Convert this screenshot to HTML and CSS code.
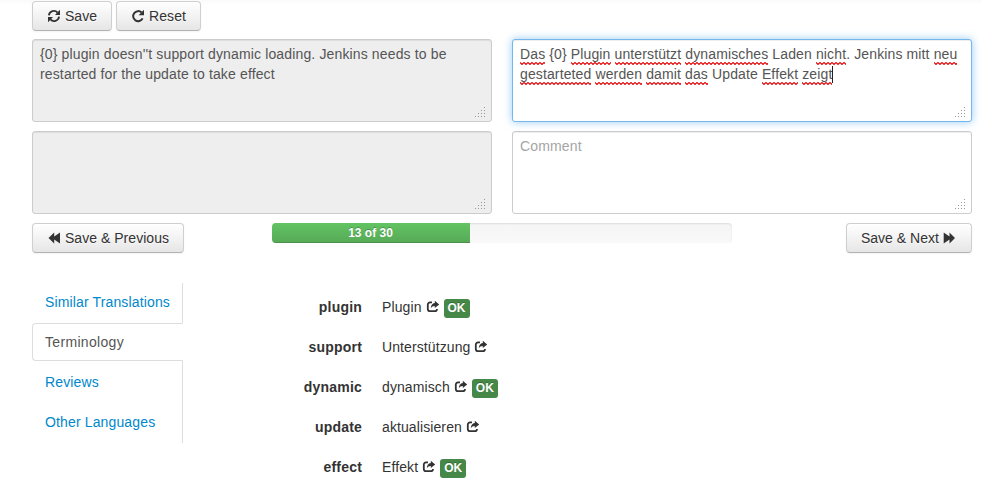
FILE: index.html
```html
<!DOCTYPE html>
<html lang="en">
<head>
<meta charset="utf-8">
<title>Translate</title>
<link rel="stylesheet" href="styles.css">
</head>
<body>
<svg class="defs" width="0" height="0">
  <defs>
    <symbol id="refresh" viewBox="0 0 14 14"><path d="M1.900 6.300A5 5 0 0 1 10.600 3.700M12.100 7.700A5 5 0 0 1 3.400 10.300" fill="none" stroke="#333" stroke-width="1.800"/><path d="M13 .8v5.200H8zM1 13.200V8h5z"/></symbol>
    <symbol id="repeat" viewBox="0 0 14 14"><path d="M11.600 9.400A5 5 0 1 1 10.600 3.500" fill="none" stroke="#333" stroke-width="2"/><path d="M13 .8v5.400H7.600z"/></symbol>
    <symbol id="back" viewBox="0 0 14 14"><path d="M1.500 7l5.700-5.500v4L13 1.500v11L7.200 8.500v4z"/></symbol>
    <symbol id="next" viewBox="0 0 14 14"><path d="M12 7L6.500 1.500v4L.7 1.500v11l5.800-4v4z"/></symbol>
    <symbol id="share" viewBox="0 0 14 14"><path d="M6 2.400H4A2.200 2.200 0 0 0 1.800 4.600V9A2.200 2.200 0 0 0 4 11.200h4.800A2.200 2.200 0 0 0 11 9" fill="none" stroke="#333" stroke-width="1.800"/><path d="M8.800 .8l4.400 3.700-4.400 3.600V6C6.900 6 5.700 6.700 4.800 8.500 4.800 5.300 6.200 3 8.800 2.900z"/></symbol>
    <symbol id="grip" viewBox="0 0 10 10"><path fill="#999" d="M9 0h1v1H9zM9 3h1v1H9zM6 3h1v1H6zM9 6h1v1H9zM6 6h1v1H6zM3 6h1v1H3zM9 9h1v1H9zM6 9h1v1H6zM3 9h1v1H3zM0 9h1v1H0z"/></symbol>
  </defs>
</svg>
<main class="container">
  <div class="toolbar">
    <button class="btn save"><svg class="icon"><use href="#refresh"/></svg> Save</button>
    <button class="btn reset"><svg class="icon"><use href="#repeat"/></svg> Reset</button>
  </div>
  <div class="editors">
    <div class="field readonly">{0} plugin doesn''t support dynamic loading. Jenkins needs to be restarted for the update to take effect<svg class="grip"><use href="#grip"/></svg></div>
    <div class="field focused"><u>Das</u> {0} <u>Plugin</u> <u>unterstützt</u> <u>dynamisches</u> Laden <u>nicht</u>. Jenkins mitt <u>neu</u> <u>gestarteted</u> <u>werden</u> <u>damit</u> <u>das</u> Update <u>Effekt</u> <u>zeigt</u><b class="caret"></b><svg class="grip"><use href="#grip"/></svg></div>
    <div class="field readonly"><svg class="grip"><use href="#grip"/></svg></div>
    <div class="field placeholder">Comment<svg class="grip"><use href="#grip"/></svg></div>
  </div>
  <div class="pager">
    <button class="btn previous"><svg class="icon"><use href="#back"/></svg> Save &amp; Previous</button>
    <div class="progress"><div class="bar">13 of 30</div></div>
    <button class="btn end">Save &amp; Next <svg class="icon"><use href="#next"/></svg></button>
  </div>
  <div class="details">
    <nav class="tabs">
      <a>Similar Translations</a>
      <a class="active">Terminology</a>
      <a>Reviews</a>
      <a>Other Languages</a>
    </nav>
    <dl class="terms">
      <dt>plugin</dt><dd>Plugin <svg class="icon"><use href="#share"/></svg> <span class="label">OK</span></dd>
      <dt>support</dt><dd>Unterstützung <svg class="icon"><use href="#share"/></svg></dd>
      <dt>dynamic</dt><dd>dynamisch <svg class="icon"><use href="#share"/></svg> <span class="label">OK</span></dd>
      <dt>update</dt><dd>aktualisieren <svg class="icon"><use href="#share"/></svg></dd>
      <dt>effect</dt><dd>Effekt <svg class="icon"><use href="#share"/></svg> <span class="label">OK</span></dd>
    </dl>
  </div>
</main>
</body>
</html>
```
FILE: styles.css
```css
* { box-sizing: border-box; }
body {
  margin: 0;
  height: 486px;
  overflow: hidden;
  background: linear-gradient(#fafafa, #fff 5px);
  font: 14px/20px "Liberation Sans", Arial, sans-serif;
  letter-spacing: .14px;
  color: #333;
}
.defs { position: absolute; }
.container { width: 940px; margin-left: 32px; padding-top: 1px; }
.toolbar { display: flex; gap: 4px; margin-bottom: 8px; }
.btn {
  height: 30px;
  padding: 4px 14px;
  border: 1px solid #ccc;
  border-color: #cfcfcf #cfcfcf #b3b3b3;
  border-radius: 4px;
  background: linear-gradient(#fff, #e6e6e6);
  box-shadow: inset 0 1px 0 rgba(255,255,255,.2), 0 1px 2px rgba(0,0,0,.05);
  font: inherit;
  letter-spacing: .04px;
  color: #333;
  text-align: left;
  text-shadow: 0 1px 1px rgba(255,255,255,.75);
  white-space: nowrap;
}
.save { width: 80px; }
.reset { width: 85px; letter-spacing: .1px; }
.previous { width: 152px; }
.end { width: 126px; letter-spacing: 0; justify-self: end; }
.icon { width: 14px; height: 14px; margin-top: 1px; vertical-align: text-top; fill: #333; }
.editors { display: grid; grid-template-columns: 460px 460px; gap: 9px 20px; grid-auto-rows: 83px; }
.field {
  position: relative;
  padding: 4px 7px;
  border: 1px solid #ccc;
  border-radius: 3px;
  background: #fff;
  box-shadow: inset 0 1px 1px rgba(0,0,0,.075);
  color: #555;
}
.readonly { background: #eee; }
.focused { border-color: #75b7ec; box-shadow: inset 0 1px 1px rgba(0,0,0,.075), 0 0 8px rgba(82,168,236,.6); letter-spacing: .125px; }
.placeholder { color: #a5a5a5; }
.field u {
  padding-bottom: 3px;
  text-decoration: none;
  background: url("data:image/svg+xml,%3Csvg xmlns='http://www.w3.org/2000/svg' width='4' height='3'%3E%3Cpath d='M-1 1.500L0 .5 2 2.500 4 .5 5 1.500' fill='none' stroke='%23e00000' stroke-width='1.100'/%3E%3C/svg%3E") 0 100% / 4px 3px repeat-x;
}
.caret { display: inline-block; width: 1px; height: 17px; margin-bottom: -4px; vertical-align: baseline; background: #222; }
.grip { position: absolute; right: 6px; bottom: 4px; width: 10px; height: 10px; }
.pager {
  display: grid;
  grid-template-columns: 240px 460px 240px;
  align-items: start;
  margin-top: 9px;
}
.progress {
  height: 20px;
  overflow: hidden;
  border-radius: 4px;
  background: linear-gradient(#f5f5f5, #f9f9f9);
  box-shadow: inset 0 1px 2px rgba(0,0,0,.1);
}
.bar {
  width: 198px;
  height: 20px;
  padding-right: 1px;
  background: linear-gradient(#62c462, #57a957);
  box-shadow: inset 0 -1px 0 rgba(0,0,0,.15);
  color: #fff;
  font-size: 12px;
  font-weight: bold;
  letter-spacing: 0;
  text-align: center;
  text-shadow: 0 -1px 0 rgba(0,0,0,.25);
}
.details { display: flex; align-items: flex-start; margin-top: 30px; }
.tabs { width: 151px; height: 160px; box-shadow: inset -1px 0 #ddd; }
.tabs a {
  display: block;
  height: 38px;
  margin-bottom: 2px;
  padding: 8px 12px;
  border: 1px solid transparent;
  border-radius: 4px 0 0 4px;
  color: #08c;
}
.tabs .active { border-color: #ddd #fff #ddd #ddd; background: #fff; color: #555; letter-spacing: .32px; }
.terms {
  display: grid;
  grid-template-columns: 160px 1fr;
  grid-auto-rows: 20px;
  gap: 20px;
  margin: 14px 0 0 19px;
}
.terms dt { font-weight: bold; letter-spacing: .2px; text-align: right; }
.terms dd { margin: 0; letter-spacing: .1px; white-space: nowrap; }
.label {
  display: inline-block;
  padding: 2px 4px;
  border-radius: 3px;
  background: #468847;
  color: #fff;
  font-size: 12px;
  font-weight: bold;
  letter-spacing: 0;
  line-height: 15px;
  vertical-align: baseline;
  text-shadow: 0 -1px 0 rgba(0,0,0,.25);
}
```
